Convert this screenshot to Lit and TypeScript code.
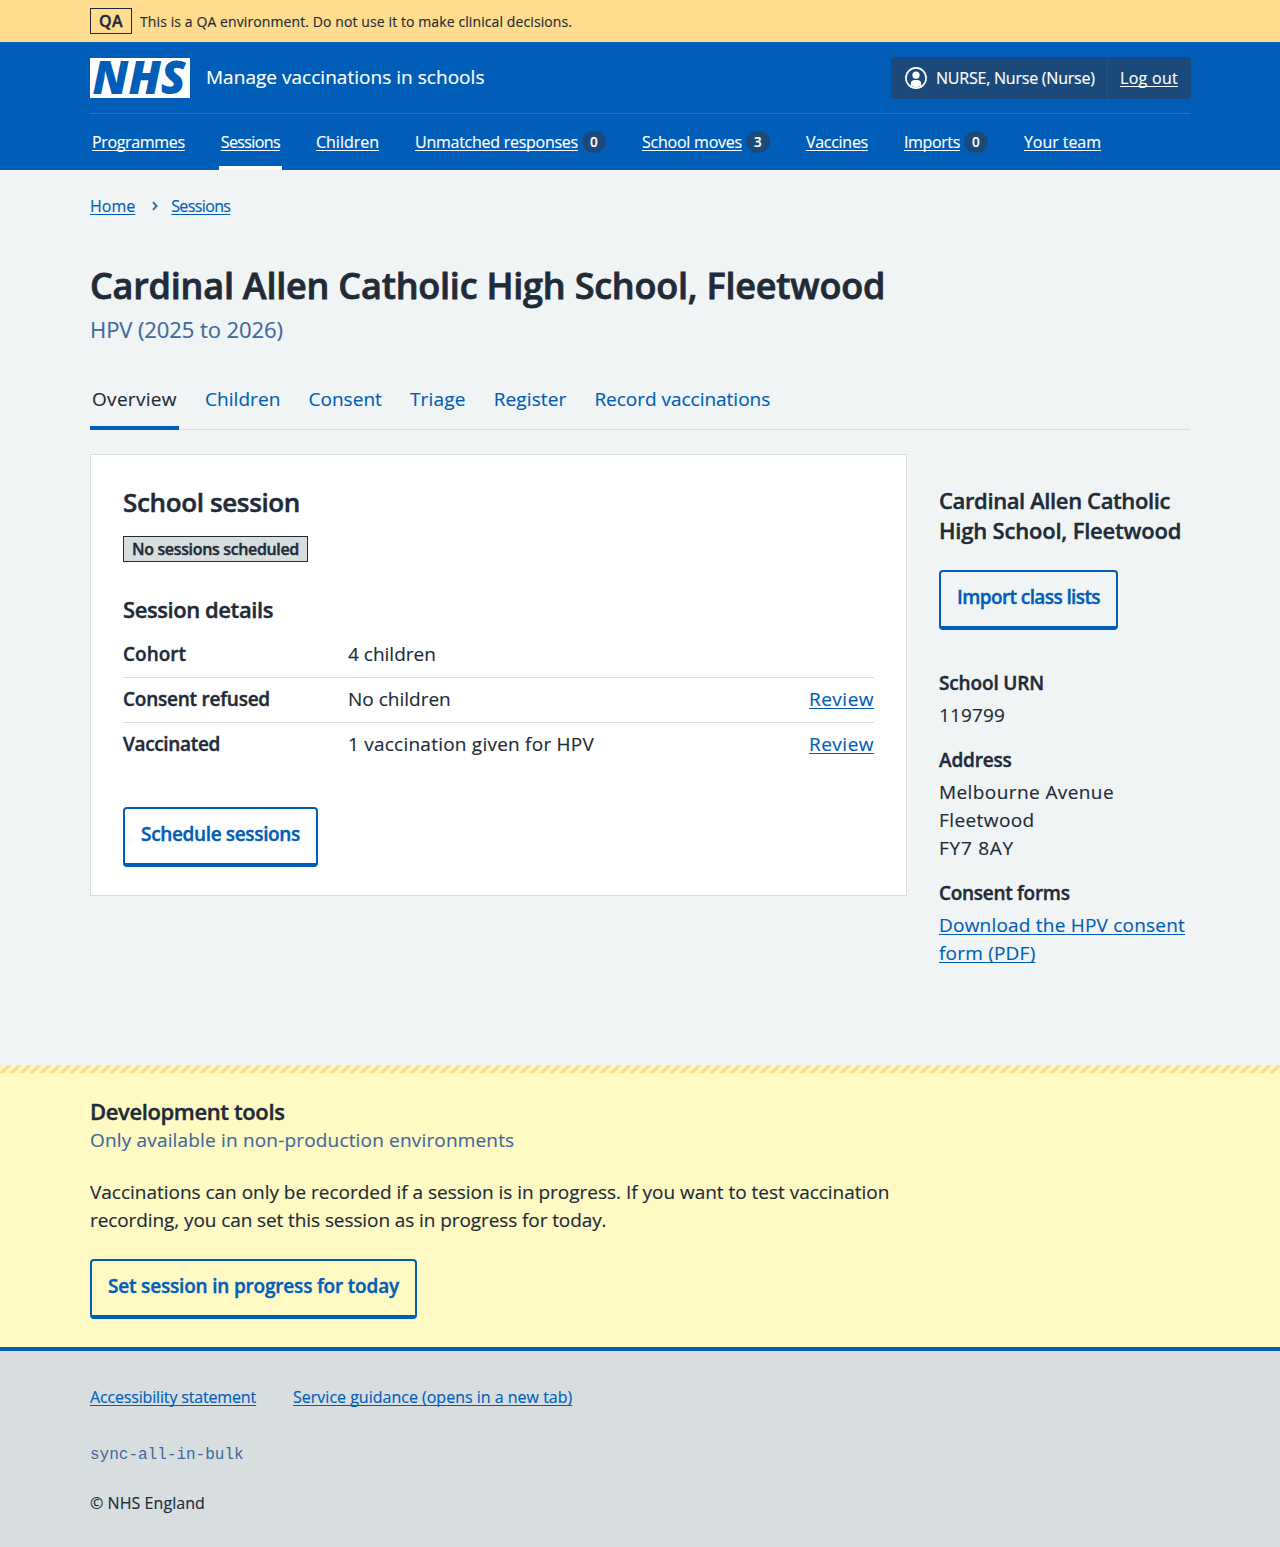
import { LitElement, html, svg, css, nothing } from "lit";
import { customElement } from "lit/decorators.js";
import { classMap } from "lit/directives/class-map.js";

interface Link {
  label: string;
  /** letter-spacing in px */
  track: number;
  count?: number;
  current?: boolean;
}

const NAV: Link[] = [
  { label: "Programmes", track: -0.34 },
  { label: "Sessions", track: -0.61, current: true },
  { label: "Children", track: -0.01 },
  { label: "Unmatched responses", track: -0.26, count: 0 },
  { label: "School moves", track: -0.23, count: 3 },
  { label: "Vaccines", track: -0.28 },
  { label: "Imports", track: -0.37, count: 0 },
  { label: "Your team", track: -0.05 },
];

const TABS: Link[] = [
  { label: "Overview", track: 0.31, current: true },
  { label: "Children", track: 0.08 },
  { label: "Consent", track: 0.04 },
  { label: "Triage", track: 0.2 },
  { label: "Register", track: 0.11 },
  { label: "Record vaccinations", track: -0.02 },
];

const ROWS = [
  { key: "Cohort", keyTrack: 0, value: "4 children", track: 0, review: false },
  { key: "Consent refused", keyTrack: -0.24, value: "No children", track: 0, review: true },
  { key: "Vaccinated", keyTrack: -0.34, value: "1 vaccination given for HPV", track: 0.23, review: true },
];

const track = (px: number) => `letter-spacing:${px}px`;

@customElement("app-root")
export class AppRoot extends LitElement {
  static styles = css`
    :host {
      display: block;
      min-height: 1547px;
      background: #f0f4f5;
      color: #212b38;
      font: 400 19px/28px "Open Sans", "Noto Sans", sans-serif;
      -webkit-text-stroke-width: 0.15px;
    }
    * { box-sizing: border-box; }
    h1, h2, h3, p, dl, dd, dt, ul, ol { margin: 0; padding: 0; }
    ul, ol { list-style: none; }
    a { color: #005eb8; text-decoration: underline; text-decoration-thickness: 1px; text-underline-offset: 2px; text-decoration-skip-ink: none; white-space: nowrap; }
    .wrap { width: 1100px; margin: 0 auto; }
    dt, h1, h2, h3, .env, .tag, .button { font-weight: 600; -webkit-text-stroke-width: 0.4px; }

    .banner { height: 42px; background: #ffdc8e; padding-top: 8px; }
    .banner .wrap { display: flex; align-items: center; gap: 8px; }
    .env { width: 42px; height: 26px; border: 1px solid #212b32; font-size: 16px; line-height: 24px; text-align: center; letter-spacing: 0.4px; }
    .env-text { padding-top: 2px; font-size: 14px; line-height: 24px; letter-spacing: 0.1px; white-space: nowrap; }

    .header { height: 128px; background: #005eb8; color: #fff; }
    .header a { color: #fff; }
    .top { height: 72px; display: flex; align-items: center; border-bottom: 1px solid #3270b5; }
    .logo { display: block; width: 100px; height: 40px; }
    .logo-word { font: italic 800 45.5px "Open Sans", sans-serif; fill: #005eb8; -webkit-text-stroke-width: 0; }
    .service { margin: 0 auto 2px 16px; letter-spacing: 0.03px; }
    .account { display: flex; height: 42px; margin-right: -1px; border-radius: 4px; background: #1b4a7a; font-size: 16px; line-height: 24px; }
    .user { width: 217px; padding: 9px 0 9px 14px; display: flex; align-items: center; gap: 9px; border-right: 1px solid #005eb8; white-space: nowrap; letter-spacing: -0.22px; }
    .user svg { width: 22px; height: 22px; flex: none; }
    .logout { width: 83px; padding: 9px 0 9px 12px; letter-spacing: 0.29px; }

    .nav { display: flex; gap: 32px; height: 56px; font-size: 16px; line-height: 24px; }
    .nav li { display: flex; align-items: center; padding: 16px 2px 12px; border-bottom: 4px solid transparent; }
    .nav .current { border-color: #fff; }
    .badge { width: 24px; height: 22px; margin-left: 4px; border-radius: 50%; background: #1b4a7a; font-size: 13.5px; line-height: 23px; font-weight: 600; text-align: center; }

    .crumbs { display: flex; align-items: center; padding-top: 24px; font-size: 16px; line-height: 24px; }
    .crumbs svg { width: 6px; height: 10px; margin: 0 13px 0 17px; }
    .crumb-last { letter-spacing: -0.62px; }
    h1 { margin-top: 46px; font-size: 36px; line-height: 44px; letter-spacing: -0.22px; white-space: nowrap; -webkit-text-stroke-width: 0.8px; }
    .caption { margin-top: 5px; font-size: 22px; line-height: 32px; color: #41699b; letter-spacing: -0.08px; }

    .tabs { display: flex; gap: 24px; height: 45px; margin-top: 40px; border-bottom: 1px solid #d8dde0; }
    .tabs li { height: 45px; padding: 0 2px; border-bottom: 4px solid transparent; color: #005eb8; white-space: nowrap; }
    .tabs .current { color: #212b38; border-color: #005eb8; }

    .columns { display: grid; grid-template-columns: 817px 251px; gap: 32px; align-items: start; margin-top: 24px; height: 611px; }
    .card { height: 442px; background: #fff; border: 1px solid #d8dde0; padding: 32px; }
    .card h2 { font-size: 26px; line-height: 30px; letter-spacing: -0.36px; -webkit-text-stroke-width: 0.5px; }
    .tag { width: 185px; height: 26px; margin-top: 19px; border: 1px solid #212b32; background: #d8dde0; font-size: 16px; line-height: 24px; text-align: center; letter-spacing: -0.35px; white-space: nowrap; }
    .card h3 { margin-top: 32px; font-size: 22px; line-height: 30px; letter-spacing: -0.42px; }
    .summary { margin-top: 9px; }
    .row { display: grid; grid-template-columns: 225px 1fr auto; height: 45px; padding-top: 7px; border-bottom: 1px solid #d8dde0; }
    .row:last-child { border-bottom: 0; }
    .review { letter-spacing: 0.49px; }

    .button { display: block; height: 60px; padding: 11px 16px 15px; border: 2px solid #005eb8; border-bottom-width: 4px; border-radius: 4px; background: transparent; color: #005eb8; font-family: inherit; font-size: 19px; line-height: 28px; white-space: nowrap; }
    .schedule { width: 195px; margin-top: 39px; letter-spacing: -0.35px; background: #fff; }
    .import { width: 179px; margin-top: 25px; letter-spacing: -0.6px; }
    .progress { width: 327px; margin-top: 25px; letter-spacing: -0.19px; }

    .aside { padding-top: 31px; }
    .aside h2 { font-size: 22px; line-height: 30px; white-space: nowrap; }
    .school-a { display: block; letter-spacing: -0.38px; }
    .school-b { display: block; letter-spacing: -0.2px; }
    .facts { margin-top: 39px; }
    .facts dd { margin: 4px 0 17px; white-space: nowrap; }
    .urn { letter-spacing: 0.14px; }
    .urn-key { letter-spacing: -0.15px; }
    .address-key { letter-spacing: -0.18px; }
    .consent-key { letter-spacing: -0.3px; }
    .address { letter-spacing: 0.41px; }
    .postcode { letter-spacing: 0.75px; }
    .download { letter-spacing: 0.21px; }

    .dev { height: 282px; background: #fff9c4; }
    .stripes { display: block; width: 100%; height: 8px; }
    .dev h2 { padding-top: 23px; height: 53px; font-size: 22px; line-height: 30px; letter-spacing: -0.38px; }
    .dev-caption { color: #41699b; letter-spacing: 0.17px; }
    .dev-text { margin-top: 24px; white-space: nowrap; }
    .dev-line { display: block; letter-spacing: -0.02px; }
    .dev-line.second { letter-spacing: -0.09px; }

    .footer { height: 200px; border-top: 4px solid #005eb8; background: #d8dde0; padding-top: 34px; font-size: 16px; line-height: 24px; }
    .footer-links { display: flex; gap: 37px; }
    .release { margin-top: 34px; font-family: "Liberation Mono", monospace; color: #41699b; -webkit-text-stroke-width: 0; }
    .copyright { margin-top: 24px; letter-spacing: 0.06px; }
  `;

  private nav() {
    return NAV.map(
      (n) => html`<li class=${classMap({ current: !!n.current })}>
        <a style=${track(n.track)}>${n.label}</a>${n.count === undefined ? nothing : html`<span class="badge">${n.count}</span>`}
      </li>`
    );
  }

  private logo() {
    return html`<svg class="logo" viewBox="0 0 100 40" aria-label="NHS">
      <rect width="100" height="40" fill="#fff"></rect>
      ${svg`<text class="logo-word" x="2.6" y="36.2" textLength="93" lengthAdjust="spacingAndGlyphs">NHS</text>`}
    </svg>`;
  }

  render() {
    return html`
      <div class="banner"><div class="wrap">
        <div class="env">QA</div>
        <div class="env-text">This is a QA environment. Do not use it to make clinical decisions.</div>
      </div></div>

      <header class="header"><div class="wrap">
        <div class="top">
          ${this.logo()}
          <div class="service">Manage vaccinations in schools</div>
          <div class="account">
            <div class="user">
              <svg viewBox="0 0 22 22">
                <circle cx="11" cy="11" r="10.1" fill="none" stroke="#fff" stroke-width="1.7"></circle>
                <circle cx="11" cy="8.2" r="3.6" fill="#fff"></circle>
                <path d="M5.8 18.6V17a4 4 0 0 1 4-4h2.4a4 4 0 0 1 4 4v1.6A9.5 9.5 0 0 1 5.8 18.6Z" fill="#fff"></path>
              </svg>
              <span>NURSE, Nurse (Nurse)</span>
            </div>
            <div class="logout"><a>Log out</a></div>
          </div>
        </div>
        <ul class="nav">${this.nav()}</ul>
      </div></header>

      <main class="wrap">
        <nav class="crumbs">
          <a>Home</a>
          <svg viewBox="0 0 6 10"><path d="M1 1.2 4.6 5 1 8.8" fill="none" stroke="#41699b" stroke-width="1.9"></path></svg>
          <a class="crumb-last">Sessions</a>
        </nav>
        <h1>Cardinal Allen Catholic High School, Fleetwood</h1>
        <p class="caption">HPV (2025 to 2026)</p>
        <ul class="tabs">
          ${TABS.map((t) => html`<li class=${classMap({ current: !!t.current })} style=${track(t.track)}>${t.label}</li>`)}
        </ul>

        <div class="columns">
          <section class="card">
            <h2>School session</h2>
            <div class="tag">No sessions scheduled</div>
            <h3>Session details</h3>
            <dl class="summary">
              ${ROWS.map(
                (r) => html`<div class="row">
                  <dt style=${track(r.keyTrack)}>${r.key}</dt>
                  <dd style=${track(r.track)}>${r.value}</dd>
                  ${r.review ? html`<a class="review">Review</a>` : nothing}
                </div>`
              )}
            </dl>
            <button class="button schedule">Schedule sessions</button>
          </section>

          <aside class="aside">
            <h2><span class="school-a">Cardinal Allen Catholic</span><span class="school-b">High School, Fleetwood</span></h2>
            <button class="button import">Import class lists</button>
            <dl class="facts">
              <dt class="urn-key">School URN</dt>
              <dd class="urn">119799</dd>
              <dt class="address-key">Address</dt>
              <dd class="address">Melbourne Avenue<br />Fleetwood<br /><span class="postcode">FY7 8AY</span></dd>
              <dt class="consent-key">Consent forms</dt>
              <dd class="download"><a>Download the HPV consent<br />form (PDF)</a></dd>
            </dl>
          </aside>
        </div>
      </main>

      <section class="dev">
        <svg class="stripes">
          <defs>
            <pattern id="stripe" width="10" height="8" patternUnits="userSpaceOnUse">
              <path d="M-1 8 7 0h5L4 8Z M-11 8-3 0h5L-6 8Z M9 8 17 0h5L14 8Z" fill="#ffdc8e"></path>
            </pattern>
          </defs>
          <rect width="100%" height="8" fill="url(#stripe)"></rect>
        </svg>
        <div class="wrap">
          <h2>Development tools</h2>
          <p class="dev-caption">Only available in non-production environments</p>
          <p class="dev-text">
            <span class="dev-line">Vaccinations can only be recorded if a session is in progress. If you want to test vaccination</span>
            <span class="dev-line second">recording, you can set this session as in progress for today.</span>
          </p>
          <button class="button progress">Set session in progress for today</button>
        </div>
      </section>

      <footer class="footer"><div class="wrap">
        <div class="footer-links">
          <a style=${track(-0.16)}>Accessibility statement</a>
          <a style=${track(0)}>Service guidance (opens in a new tab)</a>
        </div>
        <p class="release">sync-all-in-bulk</p>
        <p class="copyright">© NHS England</p>
      </div></footer>
    `;
  }
}
